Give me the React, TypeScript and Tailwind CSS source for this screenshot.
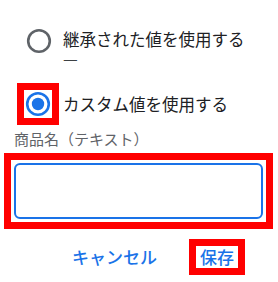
import React from 'react';

const Radio: React.FC<{ checked?: boolean }> = ({ checked }) => (
  <svg width="28" height="28" viewBox="0 0 28 28">
    <circle
      cx="14"
      cy="14"
      r="10.8"
      fill="none"
      stroke={checked ? '#1a73e8' : '#5f6368'}
      strokeWidth="2.6"
    />
    {checked && <circle cx="14" cy="14" r="6.2" fill="#1a73e8" />}
  </svg>
);

const App: React.FC = () => {
  return (
    <div className="w-[278px] h-[282px] bg-white font-['Noto_Sans_CJK_JP',sans-serif] text-[#202124]">
      {/* Inherited option */}
      <div className="flex items-start pl-[18px] pt-[20px]">
        <div className="border-[7px] border-transparent">
          <Radio />
        </div>
        <div className="ml-[3px] pt-[10px] text-[16.5px] leading-[19px]">
          <div>継承された値を使用する</div>
          <div className="leading-[18px] text-[#3c4043]">—</div>
        </div>
      </div>

      {/* Custom option */}
      <div className="flex items-center pl-[17px] mt-[16px]">
        <div className="border-[7px] border-[#ff0000] bg-white">
          <Radio checked />
        </div>
        <div className="ml-[4px] text-[16.5px] leading-[20px]">カスタム値を使用する</div>
      </div>

      {/* Text field */}
      <div className="pl-[14px] mt-[4px] text-[15px] leading-[20px] text-[#5f6368]">商品名（テキスト）</div>
      <div className="ml-[4px] mt-[4px] w-[269px] border-[7px] border-[#ff0000] p-[3px] bg-white">
        <input
          className="block w-full h-[56px] rounded-[6px] border-2 border-[#1a73e8] outline-none px-3"
          type="text"
        />
      </div>

      {/* Actions */}
      <div className="flex items-center pl-[66px] mt-[10px]">
        <button className="px-[6px] text-[17px] leading-[36px] font-medium text-[#1a73e8]">キャンセル</button>
        <div className="ml-[26px] border-[7px] border-[#ff0000] bg-white">
          <button className="block px-[4px] text-[17px] leading-[22px] font-medium text-[#1a73e8]">保存</button>
        </div>
      </div>
    </div>
  );
};

export default App;
